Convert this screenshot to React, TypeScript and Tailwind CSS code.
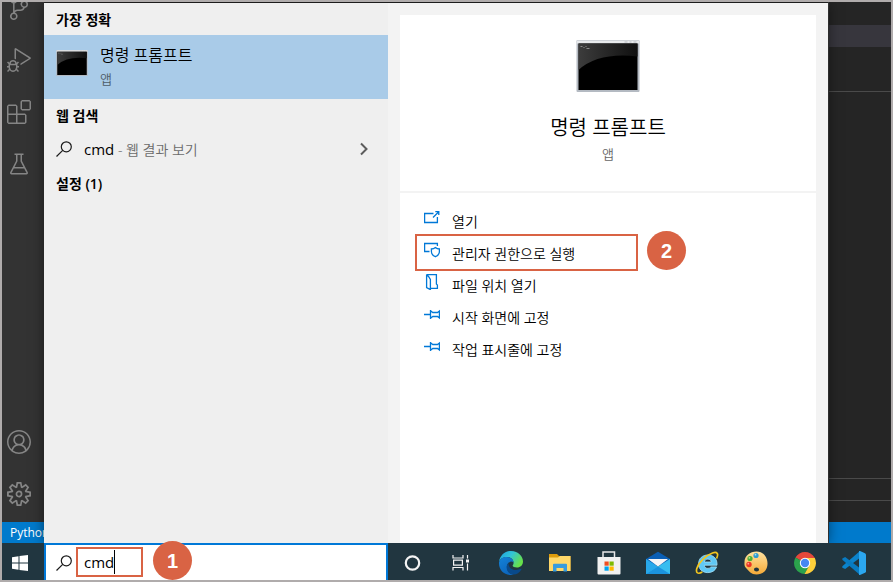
import { ReactNode, useState } from "react";
import {
   VscAccount,
   VscBeaker,
   VscDebugAlt,
   VscExtensions,
   VscSettingsGear,
   VscSourceControl,
} from "react-icons/vsc";

const CmdIcon = ({ className }: { className: string }) => (
   <svg className={className} viewBox="0 0 63 52" aria-hidden="true">
      <defs>
         <linearGradient id="gloss" x1="0" y1="0" x2="1" y2="0">
            <stop offset="0" stopColor="#3c3c3c" />
            <stop offset="1" stopColor="#101010" />
         </linearGradient>
      </defs>
      <rect width="63" height="52" rx="1" fill="#b4bac2" />
      <rect x="0.5" y="0.5" width="62" height="3" fill="#e8eaec" />
      <path d="M48 2h3M53 2h2M57 2h3" stroke="#b5b9bf" />
      <rect x="2" y="3.5" width="59" height="46.5" fill="#000" />
      <path d="M2 3.5h59v13Q22 12 2 30z" fill="url(#gloss)" />
      <path d="M4 6.5h2M7 7.5h1M9 6.5h1M10 8.5h3" stroke="#8c8c8c" />
   </svg>
);

const SearchIcon = () => (
   <svg
      className="size-4 shrink-0"
      viewBox="0 0 16 16"
      fill="none"
      stroke="#1a1a1a"
      strokeWidth="1.2"
      aria-hidden="true"
   >
      <circle cx="10.3" cy="5.8" r="5" />
      <path d="M6.7 9.3.5 15.5" />
   </svg>
);

const LineIcon = ({ children }: { children: ReactNode }) => (
   <svg
      className="mb-1.5 size-4 shrink-0"
      viewBox="0 0 16 16"
      fill="none"
      stroke="#0078d7"
      strokeWidth="1.3"
      aria-hidden="true"
   >
      {children}
   </svg>
);

const pin = (
   <path d="M0 8.5h6M6.5 4v9M6.5 4.700 8.800 6.500h4.700L15.400 5v7l-1.900-1.500H8.800L6.500 12.300" />
);

const actions = [
   {
      label: "열기",
      icon: <path d="M9.5 3.5H.6v9h12.8V7M9 7.5l5.500-5.500M11.300 1.600h3.500v3.500" />,
   },
   {
      label: "관리자 권한으로 실행",
      icon: (
         <>
            <path d="M5.500 9.500H.6v-8h12.800V4" />
            <path d="M11.400 5.600c-1.200 1-2.500 1.400-4 1.400v2.500c0 2.500 1.600 4.200 4 5.200 2.400-1 4-2.700 4-5.200V7c-1.500 0-2.800-.4-4-1.400z" />
         </>
      ),
      marked: true,
   },
   {
      label: "파일 위치 열기",
      icon: (
         <path d="M2.600.6h9.800v9.500l1 1v3.300H6.500M2.600.6v13l3.800 2V5.500L4.500 2.500 2.600.6" />
      ),
   },
   { label: "시작 화면에 고정", icon: pin },
   { label: "작업 표시줄에 고정", icon: pin },
];

const taskbarApps = [
   {
      name: "Cortana",
      icon: (
         <circle cx="11.5" cy="12" r="6.700" fill="none" stroke="#f4f4f4" strokeWidth="2.200" />
      ),
   },
   {
      name: "Task View",
      icon: (
         <g fill="none" stroke="#f4f4f4" strokeWidth="1.200">
            <path d="M3 4v3h10V4M3 19.500v-3h10v3M3.600 9.200h8.800v5H3.600zM17.500 4v3.500M17.500 12.500v7" />
            <path d="M16 8.500h3v3h-3z" fill="#f4f4f4" stroke="none" />
         </g>
      ),
   },
   {
      name: "Edge",
      icon: (
         <>
            <defs>
               <linearGradient id="edgeTop" x1="0" y1="0" x2="1" y2="0.500">
                  <stop offset="0" stopColor="#1b9fe0" />
                  <stop offset="0.500" stopColor="#32c5d8" />
                  <stop offset="1" stopColor="#67e04b" />
               </linearGradient>
               <linearGradient id="edgeBody" x1="0" y1="0" x2="0.500" y2="1">
                  <stop offset="0" stopColor="#1483d8" />
                  <stop offset="1" stopColor="#0c66bd" />
               </linearGradient>
            </defs>
            <path d="M0 11C.8 4.500 5.800 0 12 0c7.500 0 12 5.500 12 10.500 0 3.700-2.700 6-6 6-2.600 0-4.400-.9-4.400-1.700 0-.6 1-1 1-3C14.600 8.500 11.500 6 7.500 6 3.500 6 1 8.500 0 11z" fill="url(#edgeTop)" />
            <path d="M0 11.500C1 8 4 5.800 7.500 6c3.500 0 6.800 2 7.100 5.500-1-1-2.200-1.200-3.200-.8C9 11.500 7.500 14 8 17c.4 3.300 3 6.300 6.500 6.700C7 25.500 0 20 0 12.500z" fill="url(#edgeBody)" />
            <path d="M9.500 12c-3 2.500-2.300 8 1.500 10.500 3.500 2.300 9 .7 11.500-4.200.3-.5-.1-.8-.6-.5-4.900 2.500-12.500.9-12.400-5.800z" fill="#094a8b" />
         </>
      ),
   },
   {
      name: "File Explorer",
      icon: (
         <>
            <path d="M1 3h8l2 2h11.500v15H1z" fill="#dd9c0c" />
            <path d="M1 6.500h9L12 5h10.500v15H1z" fill="#ffd869" />
            <path d="M5 20.500v-6.700q0-1 1-1h12q1 0 1 1v6.700h-3.500V17h-7v3.500z" fill="#379cdf" />
         </>
      ),
   },
   {
      name: "Microsoft Store",
      icon: (
         <>
            <path d="M6 7V1h11.500v6" fill="none" stroke="#e8e8e8" strokeWidth="1.500" />
            <path d="M.5 6h23v16.500q0 1-1 1h-21q-1 0-1-1z" fill="#f1f1f1" />
            <path d="M7.500 10.500h4.200v4.200H7.500z" fill="#f04e20" />
            <path d="M12.500 10.500h4.200v4.200h-4.200z" fill="#7fba00" />
            <path d="M7.500 15.500h4.200v4.200H7.500z" fill="#00a4ef" />
            <path d="M12.500 15.500h4.200v4.200h-4.200z" fill="#ffb900" />
         </>
      ),
   },
   {
      name: "Mail",
      icon: (
         <>
            <path d="M0 8 12 .8 24 8v6H0z" fill="#0a5fb5" />
            <path d="m0 8 12 7.500v7.500H0z" fill="#28a8ea" />
            <path d="M24 8v15H0z" fill="#37bdf0" />
            <path d="M2 8h20l-10 7.500z" fill="#f5f5f7" />
            <path d="m24 23-12-7.500L0 23z" fill="#1b93de" />
         </>
      ),
   },
   {
      name: "Internet Explorer",
      icon: (
         <>
            <path d="M22 14.200H9.300c.2 2 1.500 3.200 3.600 3.200 1.300 0 2.400-.5 3-1.500h5.700c-1.300 3.700-4.600 5.700-8.700 5.700-5.600 0-9.300-3.500-9.300-8.800S7.400 4 12.900 4c5.900 0 9.500 4 9.100 10.200zM16.300 11c-.2-1.800-1.500-2.900-3.400-2.900S9.600 9.200 9.300 11z" fill="#5fc8f5" stroke="#a5e3fb" strokeWidth=".8" />
            <path d="M21.500 7.500C23.800 3 22.500.3 17.500 2 11 4.200 3.500 11.500 1.800 17.500.6 22 3 23.500 7.300 21" fill="none" stroke="#f2c51f" strokeWidth="1.700" />
         </>
      ),
   },
   {
      name: "Paint",
      icon: (
         <>
            <defs>
               <linearGradient id="palette" x1="0" y1="0" x2="0" y2="1">
                  <stop offset="0" stopColor="#ffe2a0" />
                  <stop offset="1" stopColor="#f5aa37" />
               </linearGradient>
            </defs>
            <path d="M12.500.5C19 .5 23.500 5.500 23.500 12.500S19 23.500 12.500 23.500C7 23.500 5 20 2.500 17.500S.5 13.500.5 11C.5 5 6 .5 12.500.5zM12.500 16.500c-1.500 0-2.500.8-2.500 2s1.200 2 2.700 2 2.300-1 2.300-2-1-2-2.500-2z" fill="url(#palette)" fillRule="evenodd" />
            <circle cx="12" cy="4.500" r="2.600" fill="#2d9ad0" />
            <circle cx="6" cy="7.500" r="2.600" fill="#4caf35" />
            <circle cx="5" cy="13.500" r="2.700" fill="#ec3524" />
            <circle cx="11.500" cy="3.700" r=".9" fill="#a8e0f5" />
            <circle cx="5.400" cy="6.800" r=".9" fill="#b4e69c" />
            <circle cx="4.300" cy="12.700" r=".9" fill="#ffa094" />
         </>
      ),
   },
   {
      name: "Chrome",
      icon: (
         <>
            <path d="M12 12 2.500 6.500A11 11 0 0 1 21.500 6.500L22 7H12z" fill="#e4483b" />
            <path d="M12 12 2.500 6.500A11 11 0 0 0 11.500 23l5-8.500z" fill="#2ba24c" />
            <path d="M12 7h9.800A11 11 0 0 1 11.500 23l4.800-8.500z" fill="#fdcf3a" />
            <circle cx="12" cy="12" r="5.200" fill="#fff" />
            <circle cx="12" cy="12" r="4.200" fill="#4688f1" />
         </>
      ),
   },
   {
      name: "Visual Studio Code",
      icon: (
         <>
            <path d="M18 0v6.800L3.200 18 .3 16.700v-1.500z" fill="#0b83cc" />
            <path d="M.3 7.500 3.200 6 18 17.200V24L.3 8.800z" fill="#087bc2" />
            <path d="M17 0h1l5 2.300q1 .5 1 1.500v16.400q0 1-1 1.500L18 24h-1z" fill="#2ba7f0" />
         </>
      ),
   },
];

const StepBadge = ({ step, place }: { step: number; place: string }) => (
   <span
      className={`absolute z-20 flex size-[39px] items-center justify-center rounded-full bg-[#d96344] font-['Liberation_Sans'] text-xl font-bold text-white ${place}`}
   >
      {step}
   </span>
);

const ActivityButton = ({ label, icon }: { label: string; icon: ReactNode }) => (
   <button
      type="button"
      aria-label={label}
      className="flex h-13 w-full shrink-0 items-center pl-[5px] text-2xl text-[#858585]"
   >
      {icon}
   </button>
);

const ActivityBar = () => (
   <nav className="flex w-[42px] shrink-0 flex-col overflow-hidden bg-[#333333]">
      <div className="-mt-5">
         <ActivityButton label="Source Control" icon={<VscSourceControl />} />
         <ActivityButton label="Run and Debug" icon={<VscDebugAlt />} />
         <ActivityButton label="Extensions" icon={<VscExtensions />} />
         <ActivityButton label="Testing" icon={<VscBeaker />} />
      </div>
      <div className="mt-auto pb-0.5">
         <ActivityButton label="Accounts" icon={<VscAccount />} />
         <ActivityButton label="Manage" icon={<VscSettingsGear />} />
      </div>
      <div className="flex h-[21px] items-center bg-[#007acc] pl-2 text-xs text-white">
         Python
      </div>
   </nav>
);

const SectionTitle = ({ children }: { children: ReactNode }) => (
   <h2 className="flex h-8 items-center px-3 pt-0.5 text-sm font-semibold">
      {children}
   </h2>
);

const ResultList = () => (
   <section className="w-[344px] shrink-0 bg-[#efefef]">
      <SectionTitle>가장 정확</SectionTitle>
      <button
         type="button"
         className="flex h-16 w-full gap-3 bg-[#a9cbe8] px-3 text-left"
      >
         <CmdIcon className="mt-[15px] h-[26px] w-8 shrink-0" />
         <span className="flex flex-col pt-2">
            <span className="text-base leading-6 font-[350]">명령 프롬프트</span>
            <span className="text-[13px] leading-6 font-[350] text-[#4d5b67]">앱</span>
         </span>
      </button>
      <SectionTitle>웹 검색</SectionTitle>
      <button type="button" className="flex h-9 w-full items-center gap-3 px-3">
         <SearchIcon />
         <span className="pt-0.5 text-sm font-[350] text-[#6b6b6b]">
            <span className="text-[15px] font-normal text-black">cmd</span> - 웹 결과 보기
         </span>
         <svg
            className="mr-1 ml-auto size-4"
            viewBox="0 0 16 16"
            fill="none"
            stroke="#5c5c5c"
            strokeWidth="2"
            aria-hidden="true"
         >
            <path d="m5 2.500 5.500 5.500L5 13.500" />
         </svg>
      </button>
      <SectionTitle>설정 (1)</SectionTitle>
   </section>
);

const ResultDetail = () => (
   <section className="w-[440px] shrink-0 bg-[#f3f3f3] px-3 pt-3">
      <div className="h-full bg-white">
         {/* App */}
         <div className="flex h-[178px] flex-col items-center border-b-2 border-[#f3f3f3] pt-[25px]">
            <CmdIcon className="h-[52px] w-16" />
            <h1 className="mt-5 text-xl leading-8 font-[350]">명령 프롬프트</h1>
            <p className="text-[13px] leading-5 font-[350] text-[#666666]">앱</p>
         </div>

         {/* Actions */}
         <ul className="pt-3">
            {actions.map(({ label, icon, marked }) => (
               <li key={label} className="relative">
                  <button
                     type="button"
                     className="flex h-8 w-full items-center gap-3 px-6 text-sm font-[350]"
                  >
                     <LineIcon>{icon}</LineIcon>
                     <span className="pt-0.5">{label}</span>
                  </button>
                  {marked && (
                     <>
                        <span className="pointer-events-none absolute -top-[3px] left-[15px] h-[37px] w-[223px] border-2 border-[#d96344]" />
                        <StepBadge step={2} place="-top-1.5 left-[247px]" />
                     </>
                  )}
               </li>
            ))}
         </ul>
      </div>
   </section>
);

const Editor = () => (
   <div className="flex min-w-0 flex-1 flex-col border-l border-[#3c3c3c] bg-[#252525]">
      <div className="mt-[23px] h-[22px] bg-[#37363d]" />
      <div className="h-[45px] border-b border-[#4a4a4a]" />
      <div className="flex-1 border-b border-[#4a4a4a]" />
      <div className="h-[22px] border-b border-[#4a4a4a]" />
      <div className="h-[21px]" />
      <div className="h-[21px] bg-[#007acc]" />
   </div>
);

const Taskbar = () => {
   const [query, setQuery] = useState<string>("cmd");

   return (
      <footer className="relative z-20 flex h-[37px] shrink-0 bg-[#213640]">
         <button
            type="button"
            aria-label="Start"
            className="flex w-[42px] shrink-0 items-center pt-0.5 pl-2.5"
         >
            <svg className="size-4" viewBox="0 0 16 16" fill="#fff" aria-hidden="true">
               <path d="M0 2.200 6.500 1.300v6.200H0zM7.500 1.100 16 0v7.500H7.500zM0 8.500h6.500v6.200L0 13.800zM7.500 8.500H16V16l-8.500-1.100z" />
            </svg>
         </button>

         {/* Search */}
         <div className="relative flex w-[344px] shrink-0 items-center gap-1 border-2 border-b-0 border-[#0078d7] bg-white pl-2.5">
            <SearchIcon />
            <label className="mb-0.5 flex h-[30px] w-[67px] items-center border-2 border-[#d96344] pl-1.5">
               <input
                  type="text"
                  aria-label="Search"
                  className="field-sizing-content max-w-12 min-w-0 pt-0.5 text-[15px] outline-none"
                  value={query}
                  onChange={(e) => setQuery(e.target.value)}
               />
               <span className="h-6 w-px shrink-0 bg-black" />
            </label>
            <StepBadge step={1} place="-top-1 left-[107px]" />
         </div>

         {/* Apps */}
         <div className="flex">
            {taskbarApps.map(({ name, icon }) => (
               <button
                  key={name}
                  type="button"
                  aria-label={name}
                  className="flex w-[49px] items-center justify-center pt-0.5"
               >
                  <svg className="size-6" viewBox="0 0 24 24" aria-hidden="true">
                     {icon}
                  </svg>
               </button>
            ))}
         </div>
      </footer>
   );
};

const App = () => {
   return (
      <div className="flex min-h-screen flex-col overflow-hidden border-2 border-[#b0acac] bg-[#252525] font-['Open_Sans','Noto_Sans_CJK_KR',sans-serif] text-black">
         <main className="flex flex-1 overflow-hidden">
            <ActivityBar />
            <div className="z-10 mt-px flex shrink-0 shadow-[0_0_12px_rgba(0,0,0,0.5)]">
               <ResultList />
               <ResultDetail />
            </div>
            <Editor />
         </main>
         <Taskbar />
      </div>
   );
};

export default App;
